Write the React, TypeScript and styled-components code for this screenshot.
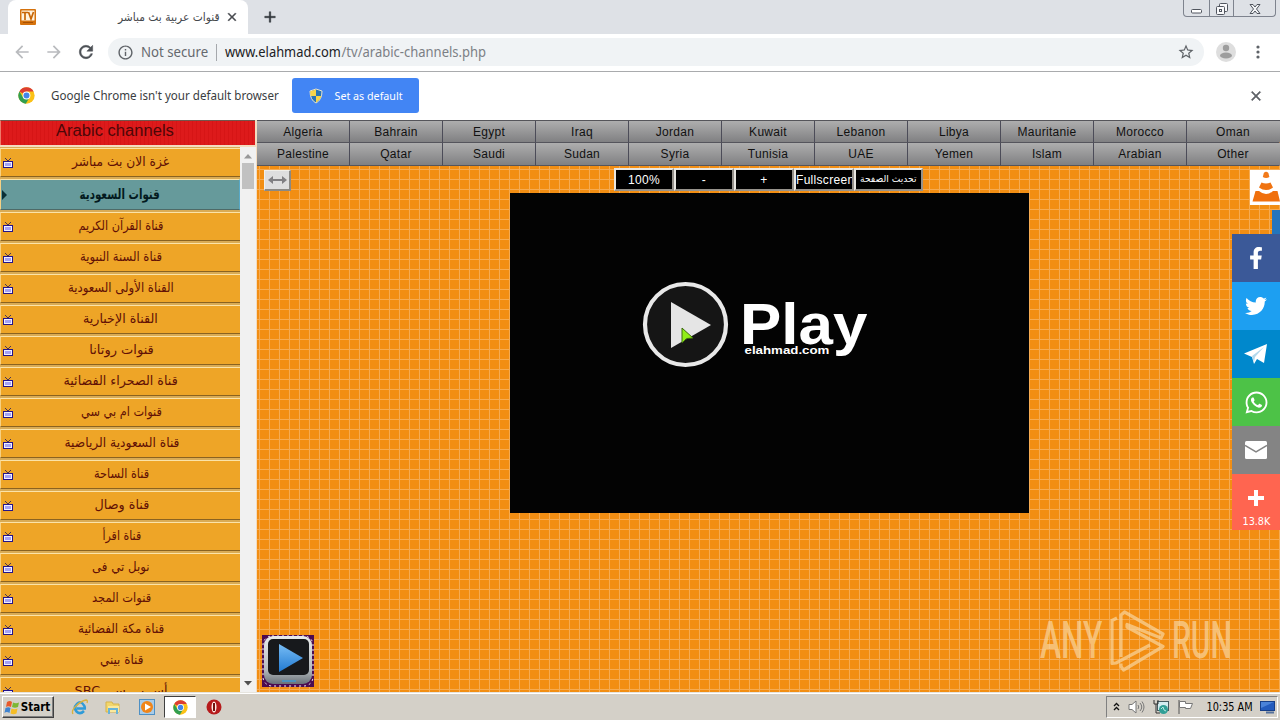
import React, { useLayoutEffect, useRef, useState } from 'react';
import styled, { createGlobalStyle } from 'styled-components';
import { FaFacebookF, FaTwitter, FaWhatsapp } from 'react-icons/fa';
import { MdRefresh, MdStarBorder, MdInfoOutline, MdArrowBack, MdArrowForward, MdClose, MdAdd } from 'react-icons/md';

const Global = createGlobalStyle`
  * { box-sizing: border-box; }
  body { margin: 0; overflow: hidden; font-family: "Liberation Sans", "DejaVu Sans", sans-serif; }
  svg { display: block; flex: none; }
`;

const FitOuter = styled.span<{ $w: number }>`
  display: inline-flex; justify-content: center; flex: none;
  width: ${p => p.$w}px; white-space: nowrap;
`;
const FitInner = styled.span` display: inline-block; flex: none; `;

/* Stretches one line of text to a fixed width. */
function Fit({ w, children }: { w: number; children: React.ReactNode }) {
  const ref = useRef<HTMLSpanElement>(null);
  const [scale, setScale] = useState(1);
  useLayoutEffect(() => {
    if (ref.current) setScale(w / ref.current.offsetWidth);
  }, [w, children]);
  return (
    <FitOuter $w={w}>
      <FitInner ref={ref} style={{ transform: `scaleX(${scale})` }}>{children}</FitInner>
    </FitOuter>
  );
}

/* Thickens an outline icon, leaving its transparent bounding path alone. */
const Bold = styled.span<{ $s: number }>`
  display: flex; flex: none;
  svg { stroke-width: 0; }
  path:not([fill="none"]) { stroke: currentColor; stroke-width: ${p => p.$s}; }
`;

const Screen = styled.div`
  width: 1280px; height: 720px; display: flex; flex-direction: column; overflow: hidden; background: #fff;
`;

/* Browser chrome */
const TabStrip = styled.div`
  height: 34px; flex: none; background: #dee1e6; display: flex; align-items: flex-start; padding-left: 8px;
`;
const Tab = styled.div`
  width: 240px; height: 34px; background: #fff; border-radius: 8px 8px 0 0;
  display: flex; align-items: center; padding: 0 9px 0 12px; color: #45484d;
  font: 11.5px "DejaVu Sans", sans-serif;
`;
const TabTitle = styled.div` flex: 1; display: flex; justify-content: flex-end; padding-right: 5px; `;
const NewTab = styled.div` padding: 8px 0 0 13px; color: #30343a; flex: 1; `;
const WindowButtons = styled.div`
  display: flex; height: 17px; width: 93px; margin-right: 4px;
  border: 1px solid #7e838e; border-top: 0; border-radius: 0 0 4px 4px;
`;
const WindowButton = styled.div<{ $w: number }>`
  width: ${p => p.$w}px; display: flex; justify-content: center; align-items: center;
  & + & { border-left: 1px solid #7e838e; }
`;
const Toolbar = styled.div`
  height: 38px; flex: none; display: flex; align-items: center; border-bottom: 1px solid #a9abad;
  padding-bottom: 1px; color: #5f6368;
`;
const NavButtons = styled.div`
  width: 108px; padding-left: 12px; display: flex; gap: 12px; color: #b9bbbe;
`;
const Reload = styled.div` color: #4d5156; `;
const AddressBar = styled.div`
  width: 1096px; height: 28px; border-radius: 14px; background: #f0f3f5;
  display: flex; align-items: center; padding: 0 9px; font: 14px "Noto Sans", sans-serif;
`;
const Secure = styled.div` margin: 0 0 2px 7px; color: #65696e; `;
const Separator = styled.div` width: 1px; height: 17px; background: #a5a8ac; margin: 0 8px; `;
const Url = styled.div` flex: 1; display: flex; color: #7c8085; margin-bottom: 2px; `;
const UrlHost = styled.span` color: #202124; `;
const UserArea = styled.div` display: flex; align-items: center; gap: 20px; padding-left: 12px; `;
const InfoBar = styled.div`
  height: 48px; flex: none; display: flex; align-items: center; padding: 0 16px 1px 18px;
  font: 12.5px "Noto Sans", sans-serif; color: #3a3d41;
`;
const InfoText = styled.div` flex: 1; display: flex; align-items: center; gap: 13px; padding-left: 16px; `;
const DefaultButton = styled.div`
  width: 127px; height: 35px; background: #4285f4; border-radius: 3px; color: #fff;
  display: flex; align-items: center; gap: 11px; padding-left: 16px; font-size: 11.5px;
`;
const Dismiss = styled.div` color: #5f6368; `;

/* Page */
const Page = styled.div` height: 572px; flex: none; display: flex; `;
const Side = styled.div` width: 257px; display: flex; flex-direction: column; background: #f3dcc0; `;
const SideHead = styled.div`
  height: 25px; margin-bottom: 2px; width: 255px; border-top: 1px solid #72554c; border-left: 1px solid #ee7a6a;
  background: repeating-linear-gradient(90deg, #dd1a1b 0 3px, #d61516 3px 4px);
  color: #4c0708; font-size: 16px; line-height: 19px; display: flex; justify-content: center; padding-right: 26px;
`;
const SideBody = styled.div` flex: 1; min-height: 0; display: flex; `;
const List = styled.div` width: 240px; overflow: hidden; background: #d9ab55; padding-top: 1px; `;
const Channel = styled.div<{ $active?: boolean }>`
  height: ${p => (p.$active ? 31 : 29)}px; margin-bottom: 2px; display: flex; align-items: center;
  border-top: 1px solid #fbe3a8; border-left: 1px solid #f7d183;
  border-bottom: 1px solid ${p => (p.$active ? '#4d6a68' : '#8a6220')};
  border-right: ${p => (p.$active ? '1px solid #58a9c8' : '0')};
  background: ${p => (p.$active ? '#669a9b' : '#eea527')};
  color: ${p => (p.$active ? '#031a20' : '#611005')};
  font: ${p => (p.$active ? 'bold 14px' : '13px')} "DejaVu Sans", sans-serif;
`;
const ChannelIcon = styled.div` width: 14px; padding-left: 1px; `;
const ChannelName = styled.div<{ $x: number }>`
  padding-left: ${p => p.$x - 15}px; padding-bottom: 1px; display: flex; line-height: 24px;
`;
const Scrollbar = styled.div`
  width: 16px; background: #f1f1f1; display: flex; flex-direction: column; align-items: center;
  padding: 7px 0 6px;
`;
const Thumb = styled.div` width: 12px; height: 26px; background: #c1c1c1; margin-top: 4px; flex: none; `;
const Grow = styled.div` flex: 1; `;

const Main = styled.div`
  position: relative; width: 1023px; display: flex; flex-direction: column; align-items: center;
  background-color: #f28e13;
  background-image: linear-gradient(90deg, #f6ab52 1px, transparent 1px), linear-gradient(#f6ab52 1px, transparent 1px);
  background-size: 10px 10px; background-position: 2px 9px;
`;
const Countries = styled.div`
  width: 1023px; height: 46px; display: grid; grid-template-columns: repeat(11, 93px);
  grid-template-rows: 22px 23px; border-top: 1px solid #55555a; flex: none;
`;
const Country = styled.div`
  border-right: 1px solid #4c4c58; border-bottom: 1px solid #55555c;
  background: linear-gradient(#aeaeae, #808082); color: #111;
  font-size: 12px; letter-spacing: .3px; display: flex; align-items: center; justify-content: center;
  &:nth-child(11n) { border-right-color: transparent; }
`;
const Controls = styled.div` display: flex; margin-top: 2px; height: 23px; `;
const Control = styled.div<{ $w?: number }>`
  width: ${p => p.$w || 60}px; height: 23px; background: #000; color: #fff; overflow: hidden;
  border: 2px solid; border-color: #e9e7e1 #96928b #96928b #e9e7e1;
  font-size: 12px; letter-spacing: .3px; line-height: 20px; text-align: center; white-space: nowrap;
`;
const ArabicLabel = styled.span` font: 9.5px/18px "DejaVu Sans", sans-serif; display: flex; justify-content: center; letter-spacing: 0; `;
const Player = styled.div`
  width: 519px; height: 320px; margin: 2px 0 0 2px; background: #030303; position: relative;
  display: flex; padding: 88px 0 0 132px;
`;
const PlayLabel = styled.div` padding-left: 11px; color: #fff; display: flex; flex-direction: column; `;
const PlayWord = styled.div` font: bold 58px/58px "Liberation Sans", sans-serif; height: 62px; padding-top: 14px; margin-left: -1px; `;
const PlaySite = styled.div` font: bold 10px/12px "Liberation Sans", sans-serif; margin-top: 2px; padding-left: 3px; `;
const Cursor = styled.div` position: absolute; left: 171px; top: 134px; `;
const WideButton = styled.div`
  position: absolute; left: 7px; top: 50px; width: 27px; height: 21px; background: #dededf;
  border: 1px solid; border-color: #f1efea #8b8985 #8b8985 #f1efea; border-right-width: 2px; border-bottom-width: 2px;
  display: flex; align-items: center; justify-content: center;
`;
const Cone = styled.div` position: absolute; right: 0; top: 50px; width: 30px; height: 35px; background: #fff; `;
const BlueTab = styled.div` position: absolute; right: 0; top: 90px; width: 8px; height: 24px; background: #2375bd; `;
const Share = styled.div` position: absolute; right: 0; top: 114px; width: 48px; `;
const ShareItem = styled.div<{ $c: string }>`
  height: 48px; background: ${p => p.$c}; color: #fff;
  display: flex; align-items: center; justify-content: center;
`;
const ShareTotal = styled.div`
  height: 56px; background: #ff6550; color: #fff; padding-top: 16px;
  display: flex; flex-direction: column; align-items: center;
`;
const Count = styled.div` font: 10px/12px "DejaVu Sans", sans-serif; margin-top: 10px; display: flex; `;
const AppBadge = styled.div` position: absolute; left: 5px; top: 515px; `;
const Watermark = styled.div`
  position: absolute; left: 783px; top: 490px; height: 62px; display: flex; align-items: center;
  color: rgba(248, 214, 160, .7); font: 500 52px/62px Roboto, sans-serif;
  svg { margin: 0 7px; }
`;

/* Taskbar */
const Taskbar = styled.div`
  height: 28px; flex: none; background: #d4d0c8; border-top: 1px solid #e6e4de; box-shadow: inset 0 1px #fff;
  display: flex; align-items: center; padding: 1px 2px 0 2px;
`;
const Start = styled.div`
  width: 52px; height: 22px; border: 1px solid; border-color: #fff #404040 #404040 #fff;
  box-shadow: inset -1px -1px #808080; display: flex; align-items: center; gap: 1px; padding-left: 1px;
  font: bold 11.5px "DejaVu Sans Condensed", "DejaVu Sans", sans-serif; color: #000;
`;
const Launch = styled.div<{ $active?: boolean; $w: number }>`
  width: ${p => p.$w}px; height: 22px; display: flex; align-items: center; justify-content: center;
  border: 1px solid transparent;
  ${p => p.$active && 'background: #fff; border-color: #404040 #fff #fff #404040;'}
`;
const Launches = styled.div` display: flex; padding-left: 9px; flex: 1; `;
const Tray = styled.div`
  width: 172px; height: 22px; border: 1px solid; border-color: #808080 #fff #fff #808080;
  display: flex; align-items: center; padding: 0 1px 0 6px; font: 11.5px "DejaVu Sans Condensed", "DejaVu Sans", sans-serif; color: #000;
`;
const TrayIcons = styled.div` display: flex; align-items: center; gap: 8px; flex: 1; `;
const MonitorIcon = styled.div` margin-left: 7px; `;

function ChromeLogo({ size }: { size: number }) {
  return (
    <svg width={size} height={size} viewBox="0 0 48 48">
      <circle cx="24" cy="24" r="23" fill="#fbc116" />
      <path d="M24 24L4 12.5A23 23 0 0 1 44 12.5H24Z" fill="#dc3e32" />
      <path d="M4 12.5A23 23 0 0 0 22 47L33 29 24 24 14 29Z" fill="#319f50" />
      <circle cx="24" cy="24" r="11" fill="#fff" /><circle cx="24" cy="24" r="8.5" fill="#4285e8" />
    </svg>
  );
}

const TvIcon = () => (
  <svg width="12" height="12" viewBox="0 0 12 12">
    <path d="M3 1l3 3 3-3" stroke="#493452" fill="none" />
    <rect x="1.5" y="4.5" width="9" height="6" fill="#f0f0ff" stroke="#24138a" />
    <rect x="3" y="6" width="6" height="3" fill="#a5a2f5" />
  </svg>
);

/* Name, left edge and width of each channel label. */
const channels: [string, number, number][] = [
  ['غزة الان بث مباشر', 72, 97], ['قنوات السعودية', 80, 80], ['قناة القرآن الكريم', 78, 85],
  ['قناة السنة النبوية', 80, 82], ['القناة الأولى السعودية', 68, 106], ['القناة الإخبارية', 83, 75],
  ['قنوات روتانا', 89, 65], ['قناة الصحراء الفضائية', 64, 114], ['قنوات ام بي سي', 81, 81],
  ['قناة السعودية الرياضية', 64, 115], ['قناة الساحة', 94, 55], ['قناة وصال', 94, 55],
  ['قناة اقرأ', 102, 39], ['نوبل تي فى', 92, 58], ['قنوات المجد', 92, 59],
  ['قناة مكة الفضائية', 78, 86], ['قناة بيني', 100, 43], ['أس بي سي SBC', 75, 93],
];
const countries = ['Algeria', 'Bahrain', 'Egypt', 'Iraq', 'Jordan', 'Kuwait', 'Lebanon', 'Libya', 'Mauritanie', 'Morocco', 'Oman',
  'Palestine', 'Qatar', 'Saudi', 'Sudan', 'Syria', 'Tunisia', 'UAE', 'Yemen', 'Islam', 'Arabian', 'Other'];

function BrowserChrome() {
  return (
    <>
      <TabStrip>
        <Tab>
          <svg width="16" height="16" viewBox="0 0 16 16">
            <rect width="16" height="16" rx="1" fill="#d5720d" />
            <rect x="1.5" y="1.5" width="13" height="10" fill="#fff3df" />
            <path d="M2 3.5h6M5 3.5V11M8.5 3l2.5 7 2.5-7" stroke="#c76505" strokeWidth="1.7" fill="none" />
            <path d="M3 13.5h10" stroke="#a85002" />
          </svg>
          <TabTitle><Fit w={102}>قنوات عربية بث مباشر</Fit></TabTitle>
          <Bold $s={0.8}><MdClose size={14} /></Bold>
        </Tab>
        <NewTab><Bold $s={0.6}><MdAdd size={18} /></Bold></NewTab>
        <WindowButtons>
          <WindowButton $w={25}><svg width="13" height="15"><rect x="1.5" y="8.5" width="10" height="3.5" rx="1" fill="#fff" stroke="#50555e" /></svg></WindowButton>
          <WindowButton $w={25}>
            <svg width="14" height="15" fill="#f8f8fa" stroke="#50555e"><rect x="4.5" y="2.5" width="8" height="8" rx="1" /><rect x="1.5" y="5.5" width="8" height="8" rx="1" /><rect x="4.5" y="8.5" width="2" height="2" /></svg>
          </WindowButton>
          <WindowButton $w={42}>
            <svg width="14" height="15"><path d="M2 3.500h3l2 2.500 2-2.500h3l-3.500 4.500 3.500 4.500h-3l-2-2.500-2 2.500h-3L5.500 8z" fill="#f5f6f8" stroke="#50555e" /></svg>
          </WindowButton>
        </WindowButtons>
      </TabStrip>
      <Toolbar>
        <NavButtons>
          <MdArrowBack size={20} /><MdArrowForward size={20} />
          <Reload><Bold $s={0.6}><MdRefresh size={20} /></Bold></Reload>
        </NavButtons>
        <AddressBar>
          <MdInfoOutline size={17} />
          <Secure><Fit w={67}>Not secure</Fit></Secure>
          <Separator />
          <Url><UrlHost><Fit w={116}>www.elahmad.com</Fit></UrlHost><Fit w={145}>/tv/arabic-channels.php</Fit></Url>
          <MdStarBorder size={18} />
        </AddressBar>
        <UserArea>
          <svg width="20" height="20" viewBox="0 0 20 20"><circle cx="10" cy="10" r="10" fill="#dedede" /><circle cx="10" cy="6" r="3.2" fill="#9d9d9d" /><ellipse cx="10" cy="13.500" rx="6" ry="3" fill="#9d9d9d" /></svg>
          <svg width="4" height="16" fill="#5f6368"><circle cx="2" cy="3" r="1.6" /><circle cx="2" cy="8" r="1.6" /><circle cx="2" cy="13" r="1.6" /></svg>
        </UserArea>
      </Toolbar>
      <InfoBar>
        <ChromeLogo size={17} />
        <InfoText>
          <Fit w={228}>Google Chrome isn't your default browser</Fit>
          <DefaultButton>
            <svg width="16" height="16" viewBox="0 0 16 16">
              <path d="M8 1l6 2q0 9-6 12Q2 12 2 3z" fill="#2875b5" stroke="#e8e4cf" />
              <path d="M8 1.500v6.500H2.600Q2.200 6 2.300 3.300zM8 8h5.400Q12 12.500 8 14.400z" fill="#f6d54b" />
            </svg>
            <Fit w={68}>Set as default</Fit>
          </DefaultButton>
        </InfoText>
        <Dismiss><Bold $s={0.8}><MdClose size={16} /></Bold></Dismiss>
      </InfoBar>
    </>
  );
}

function Sidebar() {
  return (
    <Side>
      <SideHead><Fit w={118}>Arabic channels</Fit></SideHead>
      <SideBody>
        <List>
          {channels.map(([name, x, w], i) => (
            <Channel key={name} $active={i === 1}>
              <ChannelIcon>{i === 1 ? <svg width="6" height="10"><path d="M0 0l5 5-5 5z" fill="#0b3036" /></svg> : <TvIcon />}</ChannelIcon>
              <ChannelName $x={x}><Fit w={w}><bdi dir="rtl">{name}</bdi></Fit></ChannelName>
            </Channel>
          ))}
        </List>
        <Scrollbar>
          <svg width="8" height="5"><path d="M0 4.500L4 0l4 4.500z" fill="#999" /></svg>
          <Thumb />
          <Grow />
          <svg width="8" height="5"><path d="M0 0h8L4 4.500z" fill="#505050" /></svg>
        </Scrollbar>
      </SideBody>
    </Side>
  );
}

function MainArea() {
  return (
    <Main>
      <Countries>{countries.map(c => <Country key={c}>{c}</Country>)}</Countries>
      <Controls>
        <Control>100%</Control><Control>-</Control><Control>+</Control><Control>Fullscreen</Control>
        <Control $w={69}><ArabicLabel><Fit w={57}>تحديث الصفحة</Fit></ArabicLabel></Control>
      </Controls>
      <Player>
        <svg width="88" height="88" viewBox="0 0 88 88">
          <circle cx="43.500" cy="43.500" r="40.500" fill="#151515" stroke="#e8e8e8" strokeWidth="4.200" />
          <path d="M29 21v46l40-23z" fill="#e5e5e5" />
        </svg>
        <PlayLabel>
          <PlayWord><Fit w={127}>Play</Fit></PlayWord>
          <PlaySite><Fit w={85}>elahmad.com</Fit></PlaySite>
        </PlayLabel>
        <Cursor><svg width="14" height="18"><path d="M1 1v15l4.500-4.500L12 11z" fill="#91ee17" stroke="#3b6a0b" /></svg></Cursor>
      </Player>
      <WideButton><svg width="19" height="8"><path d="M0 4l5-4v3h9V0l5 4-5 4V5H5v3z" fill="#807f83" /></svg></WideButton>
      <Cone>
        <svg width="30" height="35" viewBox="0 0 30 35">
          <path d="M13.800 3q2.200-2.500 4.600 0l1 4q-3.300 2-6.600 0z" fill="#f27a1a" />
          <path d="M11.500 12.500q4.500 2 9 0l2.500 5q-7 5-14 0z" fill="#f07310" />
          <path d="M5.500 21h3.500q7 6 14 0h4.500L30 31.500H2.500z" fill="#f0700d" />
        </svg>
      </Cone>
      <BlueTab />
      <Share>
        <ShareItem $c="#3b5998"><FaFacebookF size={22} /></ShareItem>
        <ShareItem $c="#1d9ff1"><FaTwitter size={22} /></ShareItem>
        <ShareItem $c="#0088cc"><svg width="24" height="20" viewBox="0 0 24 20"><path d="M0 9.500L23 0l-3 19-7-4-3 5-2-7z" fill="#fff" /><path d="M8 12L20 3l-9 10-1 5z" fill="#b3d9ec" /></svg></ShareItem>
        <ShareItem $c="#4dc247"><FaWhatsapp size={25} /></ShareItem>
        <ShareItem $c="#848484">
          <svg width="22" height="18" viewBox="0 0 22 18"><rect width="22" height="18" rx="1.500" fill="#fff" /><path d="M0 4.500l11 6.500 11-6.500" stroke="#848484" strokeWidth="1.500" fill="none" /></svg>
        </ShareItem>
        <ShareTotal>
          <svg width="16" height="16"><path d="M6 0h4v6h6v4h-6v6H6v-6H0V6h6z" fill="#fff" /></svg>
          <Count><Fit w={28}>13.8K</Fit></Count>
        </ShareTotal>
      </Share>
      <AppBadge>
        <svg width="52" height="52" viewBox="0 0 52 52">
          <defs>
            <linearGradient id="rim" x2="0" y2="1"><stop stopColor="#e9eced" /><stop offset=".7" stopColor="#b5bbbe" /><stop offset="1" stopColor="#687078" /></linearGradient>
            <linearGradient id="arrow" x2="0" y2="1"><stop stopColor="#78bdf5" /><stop offset="1" stopColor="#217ad2" /></linearGradient>
          </defs>
          <rect width="52" height="52" fill="#4c0b50" />
          <rect x="1" y="1" width="50" height="50" rx="9" fill="none" stroke="#fff" strokeDasharray="2 3" />
          <rect x="2" y="1" width="48" height="48" rx="9" fill="url(#rim)" />
          <rect x="6" y="4" width="41" height="36" rx="5" fill="#17191c" />
          <path d="M17 9v28l24-14z" fill="url(#arrow)" /><path d="M20 46h14" stroke="#4c91bd" strokeWidth="2" />
        </svg>
      </AppBadge>
      <Watermark>
        <Fit w={62}>ANY</Fit>
        <svg width="56" height="62" viewBox="0 0 56 62" fill="none" stroke="currentColor" strokeWidth="3.200" strokeLinejoin="round">
          <path d="M12 47V5l3.500-3L54 24l-2 4-34-13.500V17l36 19.500L14.500 60 12 56.500v-3M8 8l-5 2.500v43L7 53l34-18" />
        </svg>
        <Fit w={60}>RUN</Fit>
      </Watermark>
    </Main>
  );
}

function TaskbarRow() {
  return (
    <Taskbar>
      <Start>
        <svg width="16" height="15" viewBox="0 0 16 15">
          <path d="M3 2q3-2 5 0L7 7Q4 5.500 2 7z" fill="#e8592a" /><path d="M9 2.500q3 1.500 6 0L14 7q-3 1.500-6 0z" fill="#7db733" />
          <path d="M1.500 8q3-1.500 5 0L5.500 13q-3-2-5 0z" fill="#3f83cf" /><path d="M7.500 8.500q3 1.500 6 0l-1 5q-3 1.500-6 0z" fill="#f5bd26" />
        </svg>
        <Fit w={29}>Start</Fit>
      </Start>
      <Launches>
        <Launch $w={33}>
          <svg width="17" height="17" viewBox="0 0 17 17" fill="none">
            <path d="M13 12Q9 16 5.500 12.500T6 5t7 1.500q1 1 .8 3H5.500" stroke="#2f9bd8" strokeWidth="2.500" />
            <path d="M2 15Q0 12 5 7t10-6q2 0 1 3" stroke="#d9b13c" strokeWidth="1.300" />
          </svg>
        </Launch>
        <Launch $w={34}>
          <svg width="16" height="16"><path d="M1 3h6l1 2h6v8H1z" fill="#f2d66c" stroke="#d6b34c" /><path d="M3 7h11v6H3z" fill="#fbe99c" /><path d="M4 15V10h8v5" stroke="#69b4d8" strokeWidth="2" fill="none" /></svg>
        </Launch>
        <Launch $w={34}>
          <svg width="16" height="16"><rect x=".5" y=".5" width="15" height="15" fill="#a9cce8" stroke="#4e90c4" /><circle cx="8" cy="8" r="6" fill="#f08519" /><path d="M6 4.500v7L12 8z" fill="#fff" /></svg>
        </Launch>
        <Launch $w={32} $active><ChromeLogo size={15} /></Launch>
        <Launch $w={36}>
          <svg width="16" height="16"><ellipse cx="8" cy="8" rx="7.500" ry="7.500" fill="#b61b1c" /><ellipse cx="8" cy="8" rx="2.500" ry="5.500" fill="#ffece6" /><path d="M8 4v8" stroke="#74120f" strokeWidth="2" /></svg>
        </Launch>
      </Launches>
      <Tray>
        <TrayIcons>
          <svg width="7" height="10" fill="none" stroke="#111" strokeWidth="1.300"><path d="M1 4l2.500-2.500L6 4M1 8l2.500-2.500L6 8" /></svg>
          <svg width="17" height="16" viewBox="0 0 17 16" fill="none" stroke="#777"><path d="M1 5.500h3L8 2v12l-4-3.500H1z" fill="#fff" /><path d="M10 6q1.500 2 0 4M12 4q3.500 4 0 8M14 2.500q4 5.500 0 11" /></svg>
          <svg width="16" height="16"><rect x="4.500" y="2.500" width="11" height="9" fill="#d3edf0" stroke="#455b60" /><path d="M1 1v4h4V1M3 5v9h4" stroke="#333" fill="none" /><circle cx="10.500" cy="10.500" r="4.500" fill="#309f96" /><path d="M8 10l2-2 1 3 2 1" stroke="#b5e9df" fill="none" /></svg>
          <svg width="17" height="16"><path d="M2 1v14" stroke="#555" /><path d="M2.500 2.500h6v2h7l-2 5h-5v-1h-6z" fill="#fff" stroke="#777" /></svg>
        </TrayIcons>
        <Fit w={46}>10:35 AM</Fit>
        <MonitorIcon><svg width="16" height="14"><rect x=".5" y="1.500" width="14" height="9" fill="#235bbd" stroke="#173f88" /><path d="M1 2h13L1 8z" fill="#4a82d8" /><path d="M6 12.500h8" stroke="#55719c" strokeWidth="2" /></svg></MonitorIcon>
      </Tray>
    </Taskbar>
  );
}

export default function App() {
  return (
    <>
      <Global />
      <Screen>
        <BrowserChrome />
        <Page><Sidebar /><MainArea /></Page>
        <TaskbarRow />
      </Screen>
    </>
  );
}
